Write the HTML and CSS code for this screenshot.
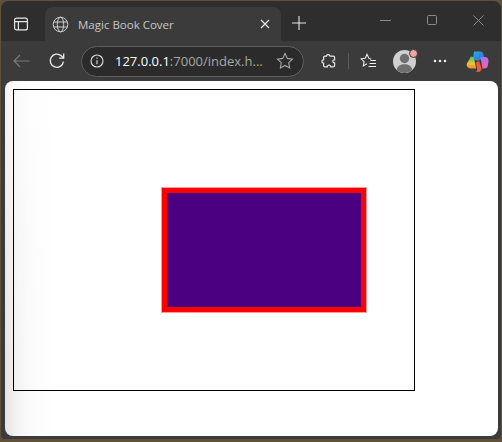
FILE: index.html
```html
<!DOCTYPE html>
<html lang="en">
<head>
<meta charset="utf-8">
<title>Magic Book Cover</title>
<link rel="stylesheet" href="styles.css">
</head>
<body>
<div class="window">
  <div class="tabstrip">
    <div class="tabs-btn">
      <svg width="16" height="16" viewBox="0 0 16 16" fill="none" stroke="#e6e6e6" stroke-width="1.2"><rect x="1.6" y="2.1" width="12.8" height="11.8" rx="2"/><path d="M1.6 5.6h12.8M5.4 5.6v8.3"/></svg>
    </div>
    <div class="tab">
      <svg class="globe" width="17" height="17" viewBox="0 0 17 17" fill="none" stroke="#cfcfcf" stroke-width="1"><circle cx="8.5" cy="8.5" r="7.3"/><ellipse cx="8.5" cy="8.5" rx="3.2" ry="7.3"/><path d="M1.8 6h13.4M1.8 11h13.4"/></svg>
      <span class="tab-title">Magic Book Cover</span>
      <svg class="tab-close" width="10" height="10" viewBox="0 0 10 10" fill="none" stroke="#e8e8e8" stroke-width="1.2"><path d="M1 1l8 8M9 1l-8 8"/></svg>
    </div>
    <svg class="newtab" width="14" height="14" viewBox="0 0 14 14" fill="none" stroke="#e8e8e8" stroke-width="1.1"><path d="M7 0v14M0 7h14"/></svg>
    <div class="caption">
      <svg width="11" height="11" viewBox="0 0 11 11" fill="none" stroke="#8a8a8a"><path d="M0 5.5h11"/></svg>
      <svg width="10" height="10" viewBox="0 0 10 10" fill="none" stroke="#8a8a8a"><rect x=".5" y=".5" width="9" height="9" rx="1"/></svg>
      <svg width="11" height="11" viewBox="0 0 11 11" fill="none" stroke="#8a8a8a"><path d="M.5.5l10 10M10.5.5l-10 10"/></svg>
    </div>
  </div>
  <div class="toolbar">
    <svg class="back" width="17" height="14" viewBox="0 0 17 14" fill="none" stroke="#7d7d7d" stroke-width="1.1"><path d="M16.5 7H1M7 1L1 7l6 6"/></svg>
    <svg class="reload" width="18" height="18" viewBox="0 0 18 18" fill="none" stroke="#ededed" stroke-width="1.3"><path d="M15.4 9.6A6.6 6.6 0 1 1 13.3 3.8L15.5 6"/><path d="M15.7 1.6V6.2H11.1"/></svg>
    <div class="address">
      <span class="info">
        <svg width="14" height="14" viewBox="0 0 14 14" fill="none" stroke="#e0e0e0" stroke-width="1.1"><circle cx="7" cy="7" r="6"/><path d="M7 6.2v4M7 3.6v1.2"/></svg>
      </span>
      <span class="url"><span class="host">127.0.0.1</span>:7000/index.h<span class="dots">...</span></span>
      <svg class="star" width="18" height="18" viewBox="0 0 18 18" fill="none" stroke="#a8a8a8" stroke-width="1.1"><path d="M9 1.6l2.3 4.8 5.2.7-3.8 3.6.9 5.2L9 13.4l-4.600 2.500.9-5.200L1.500 7.100l5.200-.7z"/></svg>
    </div>
    <svg class="ext" width="15" height="16" viewBox="0 0 15 16" fill="none" stroke="#ececec" stroke-width="1.2"><path d="M5.400 3.200C5.600 1.200 8.600 1 9 3.100h3c1 0 1.600.6 1.600 1.500v2.200c-2.300-.3-2.400 3.200 0 3v2.600c0 .9-.6 1.500-1.600 1.500H9.800c.2-2.300-3.700-2.300-3.500 0H4.100c-.9 0-1.500-.6-1.500-1.500V10.200C.4 10.400.4 6.600 2.600 6.900V4.700c0-.9.600-1.500 1.500-1.500z"/></svg>
    <span class="divider"></span>
    <svg class="favs" width="17" height="16" viewBox="0 0 17 16" fill="none" stroke="#ececec" stroke-width="1.1"><path d="M11.200 6.300L8.800 5.200 7 1.300 5.200 5.200l-4.100.6 3 2.800-.8 4.300 3.700-2.100"/><path d="M10.500 7.500h5.500M9.500 10.500h6.500M8.500 13.500h7.500"/></svg>
    <span class="avatar">
      <svg width="23" height="23" viewBox="0 0 23 23"><circle cx="11.500" cy="11.500" r="11.500" fill="#cfcfcf"/><circle cx="11.500" cy="8.500" r="4.700" fill="#6f6f6f"/><path d="M3.600 19.800c1-4 4-5.600 7.900-5.600s6.900 1.600 7.900 5.600a11.500 11.500 0 0 1-15.800 0z" fill="#6f6f6f"/></svg>
      <span class="badge"></span>
    </span>
    <svg class="more" width="14" height="4" viewBox="0 0 14 4" fill="#ececec"><circle cx="2" cy="2" r="1.300"/><circle cx="7" cy="2" r="1.300"/><circle cx="12" cy="2" r="1.300"/></svg>
    <svg class="copilot" width="23" height="23" viewBox="0 0 23 23">
      <defs>
        <linearGradient id="cpa" x1="0" y1="0" x2="1" y2="1"><stop offset="0" stop-color="#27b5e0"/><stop offset="1" stop-color="#3560dc"/></linearGradient>
        <linearGradient id="cpb" x1="0" y1="0" x2="0" y2="1"><stop offset="0" stop-color="#3fc86e"/><stop offset=".6" stop-color="#f2c230"/><stop offset="1" stop-color="#f08a2c"/></linearGradient>
        <linearGradient id="cpc" x1="0" y1="0" x2="0" y2="1"><stop offset="0" stop-color="#b56cf0"/><stop offset="1" stop-color="#e868a8"/></linearGradient>
      </defs>
      <path d="M8 1.500h6c2 0 3 1 3.400 2.500l1.100 4.500-7 2.500-4.500-2z" fill="url(#cpa)"/>
      <path d="M5 6.500c1.800 0 2.800.8 3.200 2.500l2 9.500H5.500C2 18.500.5 16.500.7 14z" fill="url(#cpb)"/>
      <path d="M14.500 7h4.500c2.500 0 3.700 1.800 3.500 4l-.6 4.500c-.3 2-1.500 3-3.900 3h-1.500z" fill="url(#cpc)"/>
      <path d="M10 12.500l3-1.500 2.700 7.500c-.3 2-1.500 3.500-3.700 3.500H9c1.600 0 2.500-1 2-3z" fill="#ee5a3a"/>
    </svg>
  </div>
  <main class="content">
    <div class="canvas">
      <div class="cover"></div>
    </div>
  </main>
</div>
</body>
</html>
```
FILE: styles.css
```css
html, body {
  margin: 0;
  height: 100%;
}
body {
  width: 502px;
  height: 442px;
  overflow: hidden;
  box-sizing: border-box;
  padding: 1px 1px 3px 1px;
  background: #5f5238;
  font-family: "Open Sans", "Noto Sans", sans-serif;
}
.window {
  box-sizing: border-box;
  height: 438px;
  display: flex;
  flex-direction: column;
  background: #3b3b3b;
  border-radius: 8px 8px 4px 4px;
  overflow: hidden;
  padding-bottom: 3px;
}
.tabstrip {
  flex: none;
  height: 40px;
  display: flex;
  align-items: center;
  background: #2e2e2e;
  padding: 6px 0 0 0;
  box-sizing: border-box;
}
.tabs-btn {
  width: 44px;
  height: 34px;
  padding-right: 4px;
  box-sizing: border-box;
  display: flex;
  align-items: center;
  justify-content: center;
  flex: none;
}
.tab {
  flex: none;
  width: 236px;
  height: 34px;
  box-sizing: border-box;
  display: flex;
  align-items: center;
  background: #3b3b3b;
  border-radius: 8px 8px 0 0;
  padding: 0 11px 0 7px;
}
.globe { flex: none; }
.tab-title {
  flex: 1;
  margin-left: 9px;
  font-size: 11.500px;
  color: #c8c8c8;
  white-space: nowrap;
}
.newtab {
  flex: none;
  margin-left: 11px;
  margin-top: -2px;
}
.caption {
  flex: none;
  margin-left: 74px;
  display: flex;
  align-items: center;
  gap: 36px;
  margin-top: -8px;
}
.toolbar {
  flex: none;
  height: 40px;
  display: flex;
  align-items: center;
  box-sizing: border-box;
  padding-left: 12px;
}
.back { flex: none; }
.reload { flex: none; margin-left: 18px; }
.address {
  flex: none;
  margin-left: 15px;
  width: 223px;
  height: 31px;
  box-sizing: border-box;
  display: flex;
  align-items: center;
  background: #2b2b2b;
  border: 1px solid #5f5f5f;
  border-radius: 16px;
  padding: 0 9px 0 8px;
}
.info {
  flex: none;
  width: 14px;
  height: 14px;
  display: flex;
}
.url {
  flex: 1;
  margin-left: 11px;
  font-size: 13px;
  color: #a8a8a8;
  white-space: nowrap;
  overflow: hidden;
}
.host { color: #fff; }
.dots { color: #c9a45c; }
.star { flex: none; }
.ext { flex: none; margin-left: 17px; }
.divider {
  flex: none;
  width: 1px;
  height: 16px;
  margin-left: 12px;
  background: #5c5c5c;
}
.favs { flex: none; margin-left: 11px; }
.avatar {
  flex: none;
  position: relative;
  width: 23px;
  height: 23px;
  margin-left: 16px;
}
.avatar svg { display: block; }
.badge {
  position: absolute;
  top: -1px;
  right: -2px;
  width: 7px;
  height: 7px;
  border-radius: 50%;
  border: 1px solid #3b3b3b;
  background: #f4a3a3;
}
.more { flex: none; margin-left: 17px; }
.copilot { flex: none; margin-left: 19px; }
.content {
  flex: 1;
  min-height: 0;
  margin: 0 3px 0 4px;
  background:
    linear-gradient(to bottom, rgba(255,255,255,.6) 0, rgba(255,255,255,0) 80%),
    linear-gradient(to right, #e4e4e4 0, #f3f3f3 12px, #fafafa 24px, #fdfdfd 36px, #fff 52px);
  border-radius: 8px;
  padding: 8px;
}
.canvas {
  position: relative;
  width: 400px;
  height: 300px;
  border: 1px solid #000;
  background: transparent;
}
.cover {
  position: absolute;
  left: 148px;
  top: 98px;
  width: 194px;
  height: 114px;
  border: 5px solid #f00;
  background: #4b0082;
  box-shadow: 0 0 0 1px #ff9a9a;
}
```
